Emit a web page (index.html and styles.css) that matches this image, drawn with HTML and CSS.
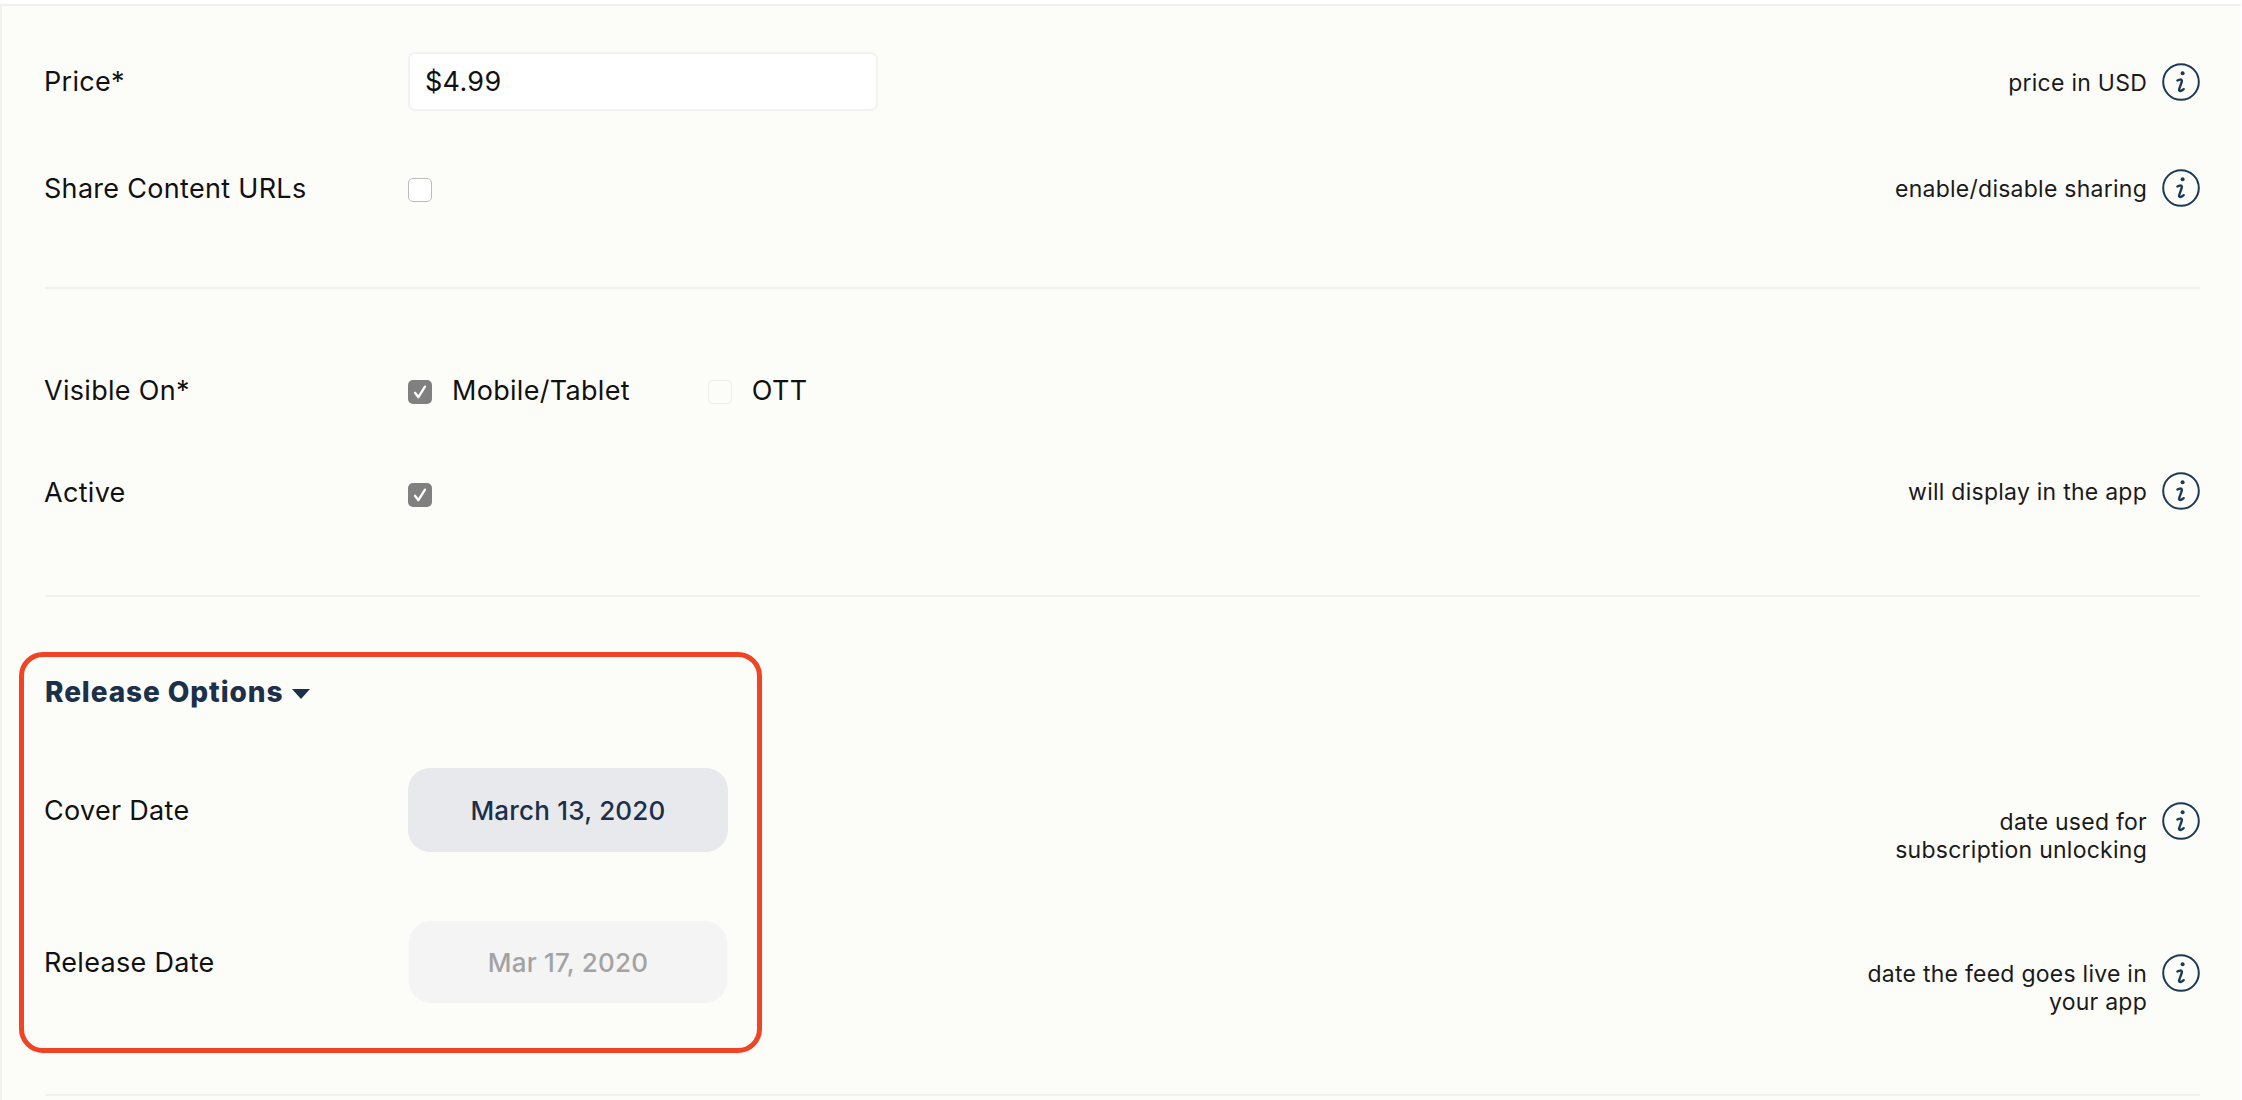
FILE: index.html
```html
<!DOCTYPE html>
<html lang="en">
  <head>
    <meta charset="UTF-8" />
    <meta name="viewport" content="width=device-width, initial-scale=1.0" />
    <title>Feed settings</title>
    <link rel="stylesheet" href="styles.css">
  </head>
  <body>
    <svg class="defs" width="0" height="0" aria-hidden="true">
      <symbol id="info" viewBox="0 0 38 38">
        <circle cx="19" cy="19" r="17.8" fill="none" stroke="currentColor" stroke-width="2" />
        <circle cx="20.6" cy="10.2" r="2" fill="currentColor" />
        <path d="M15.400 17.500c1.800-1 4.200-1.500 4.500.1.200 1.300-2.600 7.300-2.800 9-.2 2.100 2.400 1.700 4.600-.4" fill="none" stroke="currentColor" stroke-width="2.400" stroke-linecap="round" />
      </symbol>
      <symbol id="tick" viewBox="0 0 24 24">
        <path d="M7 12.800l3.400 4.400L17 6.600" fill="none" stroke="#fff" stroke-width="2.300" stroke-linecap="round" stroke-linejoin="round" />
      </symbol>
    </svg>

    <main class="panel">
      <section class="group group-pricing">
        <div class="row row-price">
          <label class="field-label" for="price">Price*</label>
          <input class="text-input" id="price" type="text" value="$4.99" />
          <div class="help">
            <p>price in USD</p>
            <svg class="info-icon"><use href="#info" /></svg>
          </div>
        </div>
        <div class="row row-share">
          <span class="field-label">Share Content URLs</span>
          <span class="check"></span>
          <div class="help">
            <p>enable/disable sharing</p>
            <svg class="info-icon"><use href="#info" /></svg>
          </div>
        </div>
      </section>

      <section class="group group-visibility">
        <div class="row row-visible">
          <span class="field-label">Visible On*</span>
          <div class="options">
            <label class="option option-mobile">
              <span class="check checked"><svg><use href="#tick" /></svg></span>
              Mobile/Tablet
            </label>
            <label class="option">
              <span class="check disabled"></span>
              OTT
            </label>
          </div>
        </div>
        <div class="row row-active">
          <span class="field-label">Active</span>
          <span class="check checked check-low"><svg><use href="#tick" /></svg></span>
          <div class="help">
            <p>will display in the app</p>
            <svg class="info-icon"><use href="#info" /></svg>
          </div>
        </div>
      </section>

      <section class="group group-release">
        <h2 class="group-title">Release Options <span class="caret"></span></h2>
        <div class="row row-cover">
          <span class="field-label">Cover Date</span>
          <button class="date-btn" type="button">March 13, 2020</button>
          <div class="help">
            <p>date used for<br />subscription unlocking</p>
            <svg class="info-icon"><use href="#info" /></svg>
          </div>
        </div>
        <div class="row row-release">
          <span class="field-label">Release Date</span>
          <button class="date-btn date-btn-off" type="button">Mar 17, 2020</button>
          <div class="help">
            <p>date the feed goes live in your app</p>
            <svg class="info-icon"><use href="#info" /></svg>
          </div>
        </div>
        <div class="highlight"></div>
      </section>
    </main>
  </body>
</html>
```

FILE: styles.css
```css
* {
  box-sizing: border-box;
}
html,
body {
  height: 1100px;
  overflow: hidden;
}
body {
  margin: 0;
  background: #fff;
  color: #111;
  font-family: Inter, "Liberation Sans", sans-serif;
  font-size: 27px;
  font-optical-sizing: none;
  letter-spacing: 0.3px;
}
.defs {
  position: absolute;
}
.panel {
  width: 2241px;
  height: 1096px;
  margin-top: 4px;
  padding: 0 41px 0 43px;
  background: #fcfdf9;
  border-top: 2px solid #f1f2ee;
  border-left: 2px solid #f1f2ee;
}
.group {
  position: relative;
  border-bottom: 2px solid #f1f2ee;
}
.group-pricing {
  padding: 46px 0 80px;
}
.group-visibility {
  padding: 82px 0 85px;
}
.group-release {
  padding: 80px 0 92px;
}
.row {
  display: flex;
  align-items: center;
}
.row-share {
  margin-top: 58px;
  height: 38px;
}
.row-visible,
.row-active {
  height: 38px;
}
.row-active {
  margin-top: 63px;
}
.row-cover {
  margin-top: 61px;
  align-items: flex-start;
  height: 84px;
}
.row-release {
  margin-top: 70px;
  align-items: flex-start;
  height: 80px;
}
.field-label {
  flex: none;
  width: 364px;
  margin-left: -1px;
}
.row-active .field-label {
  margin-top: 2px;
}
.row-cover .field-label {
  margin-top: 26px;
}
.row-release .field-label {
  margin-top: 24px;
}
.text-input {
  width: 470px;
  height: 59px;
  padding: 0 15px;
  border: 2px solid #f2f2f0;
  border-radius: 7px;
  background: #fff;
  color: #111;
  font: inherit;
  letter-spacing: inherit;
}
.check {
  flex: none;
  display: block;
  width: 24px;
  height: 24px;
  margin-top: 3px;
  background: #fff;
  border: 1px solid #bcbcbc;
  border-radius: 5px;
}
.check-low {
  margin-top: 8px;
}
.check svg {
  display: block;
  width: 24px;
  height: 24px;
}
.check.checked {
  background: #808080;
  border: 0;
}
.check.disabled {
  background: #fcfdf9;
  border-color: #eeeeea;
}
.options {
  display: flex;
  align-items: center;
}
.option {
  display: flex;
  align-items: center;
  gap: 20px;
}
.option-mobile {
  margin-right: 78px;
}
.help {
  display: flex;
  align-items: flex-start;
  gap: 15px;
  margin-left: auto;
  font-size: 23px;
  letter-spacing: 0.25px;
  line-height: 28px;
  color: #1a1a1a;
  text-align: right;
}
.help p {
  max-width: 285px;
  margin: 6px 0 0;
}
.row-cover .help {
  margin-top: 34px;
}
.row-release .help {
  margin-top: 32px;
}
.info-icon {
  flex: none;
  width: 38px;
  height: 38px;
  color: #1c3a55;
}
.group-title {
  display: flex;
  align-items: center;
  gap: 9px;
  height: 30px;
  margin: 0;
  color: #1c3049;
  font-size: 28px;
  font-weight: 800;
  letter-spacing: 0.9px;
}
.caret {
  width: 0;
  height: 0;
  margin-top: 4px;
  border-left: 9px solid transparent;
  border-right: 9px solid transparent;
  border-top: 10px solid #1c3049;
}
.date-btn {
  flex: none;
  width: 320px;
  height: 84px;
  border: 0;
  border-radius: 22px;
  background: #e8e9ec;
  color: #1c3049;
  font: 550 26px Inter, "Liberation Sans", sans-serif;
  font-optical-sizing: none;
  letter-spacing: 0.2px;
}
.date-btn-off {
  width: 318px;
  height: 82px;
  margin: -1px 0 0 1px;
  background: #f4f4f4;
  color: #a3a3a3;
}
/* annotation drawn over the release block */
.highlight {
  position: absolute;
  top: 55px;
  left: -26px;
  width: 743px;
  height: 401px;
  border: 5px solid #f04425;
  border-radius: 24px;
  pointer-events: none;
}
```
